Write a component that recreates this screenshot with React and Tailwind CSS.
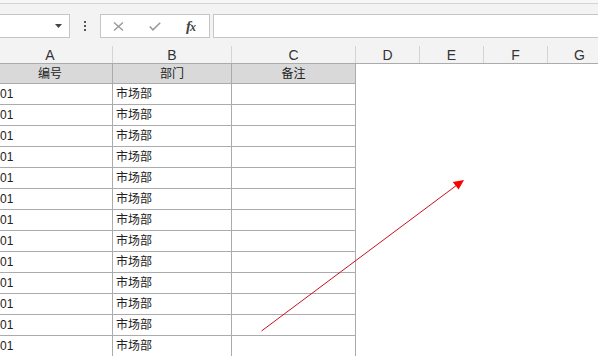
import React from "react";

const rows = Array.from({ length: 13 });

export default function App() {
  return (
    <div
      className="relative w-[598px] h-[356px] overflow-hidden bg-white text-[#222]"
      style={{ fontFamily: "'Liberation Sans', 'Noto Sans CJK SC', sans-serif" }}
    >
      <div className="h-[3px] bg-[#f7f7f7]" />
      <div className="h-px bg-[#d4d4d4]" />
      <div className="bg-[#f3f3f3] pt-[10px]">
        {/* formula bar */}
        <div className="flex h-[24px]">
          <div className="relative w-[70px] border border-l-0 border-[#c6c6c6] bg-white flex items-center justify-end pr-[7px]">
            <svg width="7" height="4" viewBox="0 0 7 4">
              <polygon points="0,0 7,0 3.5,4" fill="#444" />
            </svg>
          </div>
          <div className="w-[30px] flex flex-col items-center justify-center gap-[2px]">
            <div className="w-[2px] h-[2px] bg-[#555]" />
            <div className="w-[2px] h-[2px] bg-[#555]" />
            <div className="w-[2px] h-[2px] bg-[#555]" />
          </div>
          <div className="w-[110px] border border-[#c6c6c6] bg-white flex items-center">
            <div className="w-[12px] ml-[12px]">
              <svg width="11" height="9" viewBox="0 0 11 9">
                <path d="M1 0.5 L10 8.5 M10 0.5 L1 8.5" stroke="#9a9a9a" strokeWidth="1.4" fill="none" />
              </svg>
            </div>
            <div className="w-[12px] ml-[24px]">
              <svg width="12" height="9" viewBox="0 0 12 9">
                <path d="M0.8 4.5 L4 7.8 L11.2 0.8" stroke="#9a9a9a" strokeWidth="1.6" fill="none" />
              </svg>
            </div>
            <div
              className="ml-[25px] text-[#444] italic font-bold leading-none flex items-baseline"
              style={{ fontFamily: "'Liberation Serif', serif" }}
            >
              <span className="text-[15px]">f</span>
              <span className="text-[12px] -ml-[1px]">x</span>
            </div>
          </div>
          <div className="ml-[3px] flex-1 border border-r-0 border-[#c6c6c6] bg-white" />
        </div>
        <div className="h-[8px]" />
        {/* column headers */}
        <div className="flex h-[18px] border-b border-[#ababab] -ml-[12px] text-[14px] text-[#333]">
          {[
            ["A", "w-[125px]"],
            ["B", "w-[119px]"],
            ["C", "w-[124px]"],
            ["D", "w-[64px]"],
            ["E", "w-[64px]"],
            ["F", "w-[64px]"],
            ["G", "w-[64px]"],
          ].map(([l, w]) => (
            <div
              key={l}
              className={`${w} shrink-0 border-r border-[#d4d4d4] flex items-center justify-center leading-none`}
            >
              {l}
            </div>
          ))}
        </div>
      </div>
      {/* data */}
      <div className="flex flex-col -ml-[12px] text-[12px]">
        <div className="flex h-[20px] bg-[#d9d9d9] w-[368px]">
          <div className="w-[125px] shrink-0 border-r border-b border-[#ababab] flex items-center justify-center">编号</div>
          <div className="w-[119px] shrink-0 border-r border-b border-[#ababab] flex items-center justify-center">部门</div>
          <div className="w-[124px] shrink-0 border-r border-b border-[#ababab] flex items-center justify-center">备注</div>
        </div>
        {rows.map((_, i) => (
          <div key={i} className="flex h-[21px] w-[368px]">
            <div className="w-[125px] shrink-0 border-r border-b border-[#ababab] flex items-center pl-[12px]">01</div>
            <div className="w-[119px] shrink-0 border-r border-b border-[#ababab] flex items-center pl-[3px]">市场部</div>
            <div className="w-[124px] shrink-0 border-r border-b border-[#ababab]" />
          </div>
        ))}
      </div>
      {/* arrow */}
      <svg className="absolute left-0 top-0 pointer-events-none" width="598" height="356">
        <line x1="261.5" y1="331" x2="457" y2="185" stroke="#c8101e" strokeWidth="1" />
        <polygon points="464,180 458.6,189.4 452.8,182" fill="#ff0000" />
      </svg>
    </div>
  );
}
